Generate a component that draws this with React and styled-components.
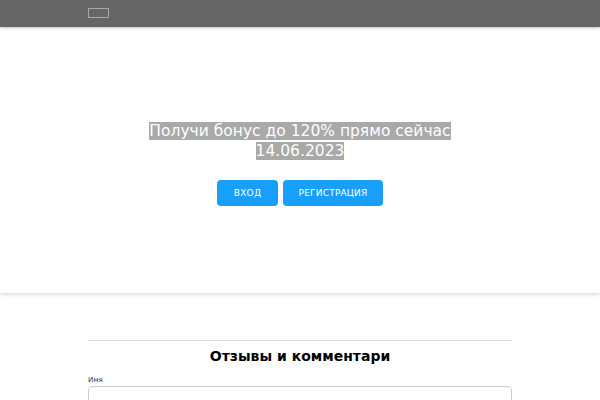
import styled, { createGlobalStyle } from "styled-components";

const Global = createGlobalStyle`
  html, body {
    margin: 0;
    padding: 0;
    background: #fff;
    font-family: "DejaVu Sans", sans-serif;
  }
`;

const Header = styled.header`
  background: #666;
  height: 27px;
  box-shadow: 0 1px 3px rgba(0, 0, 0, 0.25);
  position: relative;
  z-index: 2;
`;

const Container = styled.div`
  width: 424px;
  margin: 0 auto;
`;

const HeaderInner = styled(Container)`
  height: 27px;
  display: flex;
  align-items: center;
`;

const Logo = styled.div`
  width: 19px;
  height: 8px;
  border: 1px solid #a8a8a8;
  margin-top: -1px;
`;

const Hero = styled.section`
  height: 266px;
  background: #fff;
  box-shadow: 0 1px 4px rgba(0, 0, 0, 0.18);
  display: flex;
  flex-direction: column;
  align-items: center;
  justify-content: center;
  padding-top: 7px;
  box-sizing: border-box;
`;

const Title = styled.h1`
  margin: 0;
  font-size: 15.5px;
  font-weight: normal;
  line-height: 20px;
  text-align: center;
  color: #fff;
  span {
    background: #a9a9a9;
  }
`;

const Buttons = styled.div`
  display: flex;
  gap: 5px;
  margin-top: 19px;
`;

const Button = styled.a`
  display: flex;
  align-items: center;
  justify-content: center;
  height: 26px;
  width: ${(p) => p.$w}px;
  background: #189ffb;
  color: #fff;
  border-radius: 4px;
  font-size: 9px;
  letter-spacing: 0.2px;
  text-transform: uppercase;
  text-decoration: none;
`;

const Comments = styled(Container)`
  padding-top: 47px;
`;

const Rule = styled.hr`
  margin: 0;
  border: 0;
  border-top: 1px solid #ddd;
`;

const Heading = styled.h2`
  margin: 6px 0 0;
  font-size: 14px;
  line-height: 18px;
  font-weight: bold;
  text-align: center;
  color: #000;
`;

const Label = styled.label`
  display: block;
  margin-top: 11px;
  font-size: 7px;
  line-height: 8px;
  color: #333;
`;

const Input = styled.input`
  display: block;
  width: 100%;
  box-sizing: border-box;
  margin-top: 2px;
  height: 30px;
  border: 1px solid #ccc;
  border-radius: 4px;
`;

export default function App() {
  return (
    <>
      <Global />
      <Header>
        <HeaderInner>
          <Logo />
        </HeaderInner>
      </Header>
      <Hero>
        <Title>
          <span>Получи бонус до 120% прямо сейчас</span>
          <br />
          <span>14.06.2023</span>
        </Title>
        <Buttons>
          <Button href="#" $w={61}>Вход</Button>
          <Button href="#" $w={100}>Регистрация</Button>
        </Buttons>
      </Hero>
      <Comments>
        <Rule />
        <Heading>Отзывы и комментари</Heading>
        <Label>Имя</Label>
        <Input />
      </Comments>
    </>
  );
}
